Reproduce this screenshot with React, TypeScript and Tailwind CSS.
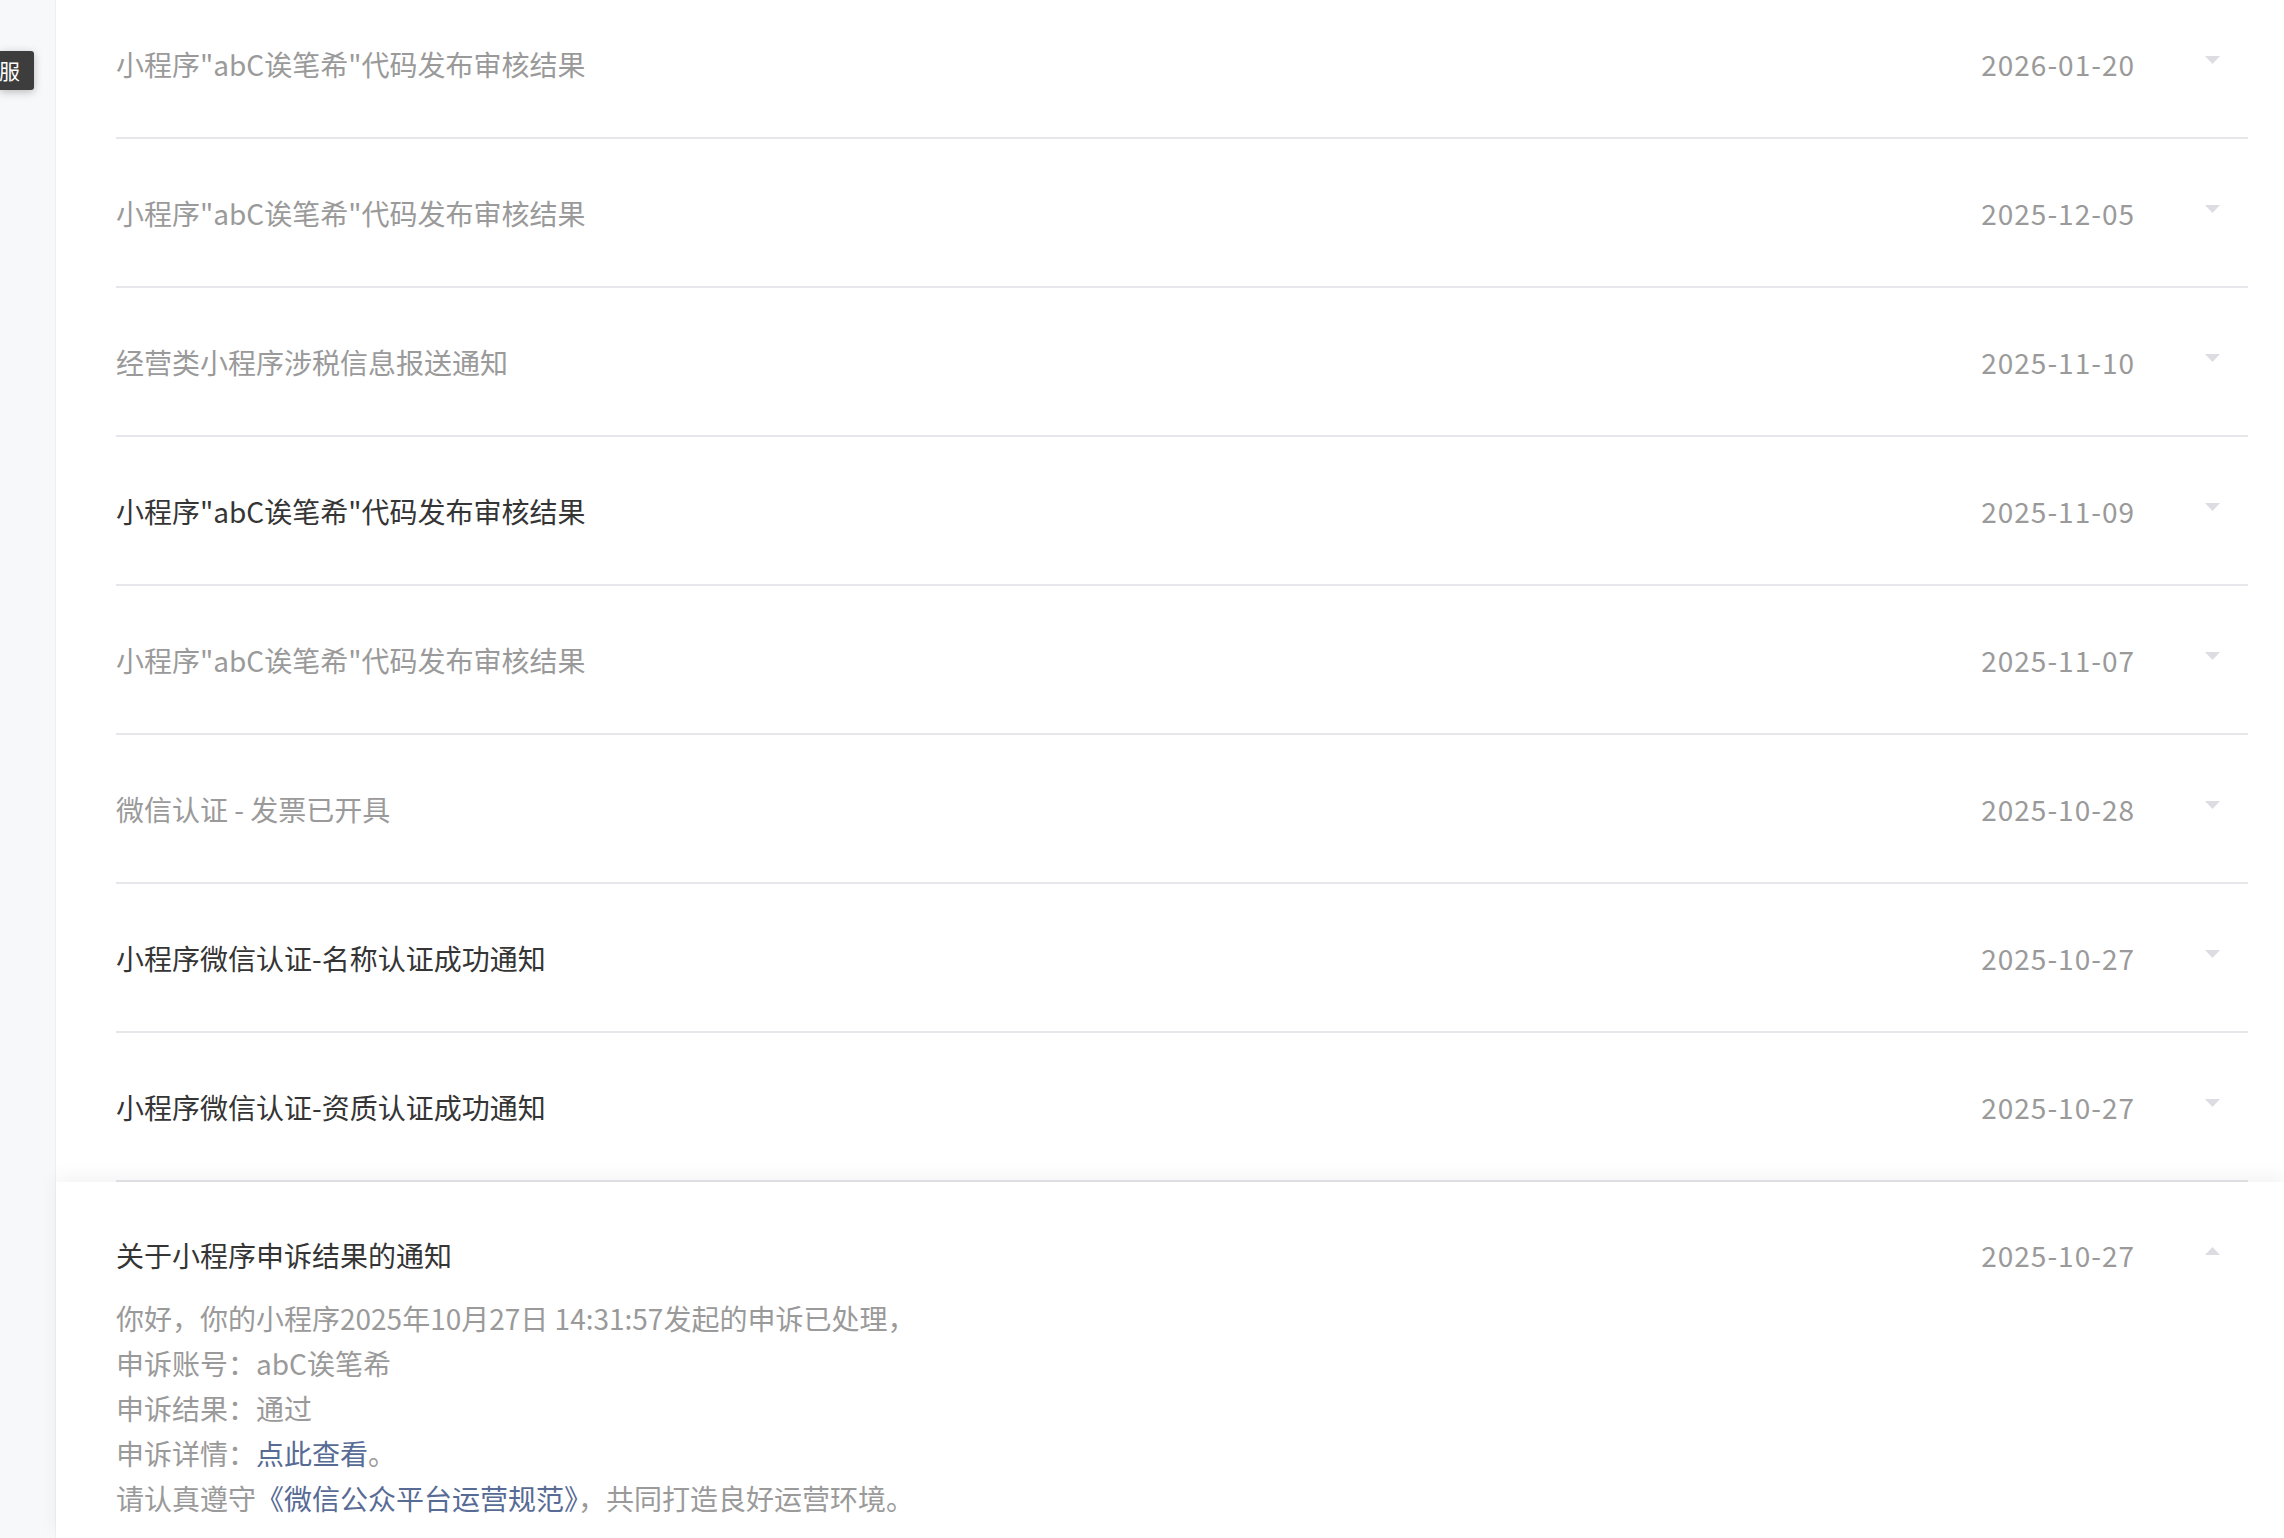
import React from 'react';

interface Notice {
  title: string;
  date: string;
  unread?: boolean;
}

const NOTICES: Notice[] = [
  { title: '小程序"abC诶笔希"代码发布审核结果', date: '2026-01-20' },
  { title: '小程序"abC诶笔希"代码发布审核结果', date: '2025-12-05' },
  { title: '经营类小程序涉税信息报送通知', date: '2025-11-10' },
  { title: '小程序"abC诶笔希"代码发布审核结果', date: '2025-11-09', unread: true },
  { title: '小程序"abC诶笔希"代码发布审核结果', date: '2025-11-07' },
  { title: '微信认证 - 发票已开具', date: '2025-10-28' },
  { title: '小程序微信认证-名称认证成功通知', date: '2025-10-27', unread: true },
  { title: '小程序微信认证-资质认证成功通知', date: '2025-10-27', unread: true },
];

function Caret({ up = false }: { up?: boolean }) {
  return (
    <svg width="15" height="8" viewBox="0 0 15 8" className="block">
      {up ? (
        <polygon points="0,8 15,8 7.5,0" fill="#dcdce2" />
      ) : (
        <polygon points="0,0 15,0 7.5,8" fill="#dcdce2" />
      )}
    </svg>
  );
}

function NoticeRow({ notice }: { notice: Notice }) {
  return (
    <div className="h-[149px] pl-[60px] pr-[36px] shrink-0">
      <div className="h-full flex items-center border-b-2 border-[#e7e7eb]">
        <div
          className={`flex-1 text-[28px] leading-[40px] whitespace-pre ${
            notice.unread ? 'text-[#353535]' : 'text-[#9a9a9a]'
          }`}
        >
          {notice.title}
        </div>
        <div className="text-[28px] leading-[40px] text-[#9a9a9a] tracking-[1px]">{notice.date}</div>
        <div className="w-[15px] ml-[70px] mr-[28px] -mt-[8px]">
          <Caret />
        </div>
      </div>
    </div>
  );
}

export default function App() {
  return (
    <div
      className="w-[2284px] h-[1538px] overflow-hidden bg-white flex relative"
      style={{ fontFamily: '"Noto Sans CJK SC", "Noto Sans", sans-serif' }}
    >
      {/* Left rail */}
      <div className="w-[56px] shrink-0 bg-[#f7f8fa] border-r border-[#eff0f2]" />

      {/* List */}
      <div className="flex-1 flex flex-col -mt-[10px] min-w-0">
        {NOTICES.map((n, i) => (
          <NoticeRow key={i} notice={n} />
        ))}

        {/* Expanded item */}
        <div className="flex-1 bg-white shadow-[0_-6px_18px_rgba(0,0,0,0.05)] pl-[60px] pr-[36px] pt-[51px] relative">
          <div className="flex items-center">
            <div className="flex-1 text-[28px] leading-[45px] text-[#353535]">关于小程序申诉结果的通知</div>
            <div className="text-[28px] leading-[45px] text-[#9a9a9a] tracking-[1px]">2025-10-27</div>
            <div className="w-[15px] ml-[70px] mr-[28px] -mt-[10px]">
              <Caret up />
            </div>
          </div>
          <div className="mt-[18px] text-[28px] leading-[45px] text-[#9a9a9a]">
            <p>你好，你的小程序2025年10月27日 14:31:57发起的申诉已处理，</p>
            <p>申诉账号：abC诶笔希</p>
            <p>申诉结果：通过</p>
            <p>
              申诉详情：<span className="text-[#576b95]">点此查看</span>。
            </p>
            <p>
              请认真遵守<span className="text-[#576b95]">《微信公众平台运营规范》</span>，共同打造良好运营环境。
            </p>
          </div>
        </div>
      </div>

      {/* Clipped tooltip at left edge */}
      <div className="absolute left-0 top-[51px] w-[34px] h-[39px] bg-[#3d3d3d] rounded-r-[3px] shadow-[0_2px_8px_rgba(0,0,0,0.25)] flex items-center overflow-hidden">
        <span className="text-white text-[21px] leading-none -ml-[1px]">服</span>
      </div>
    </div>
  );
}
